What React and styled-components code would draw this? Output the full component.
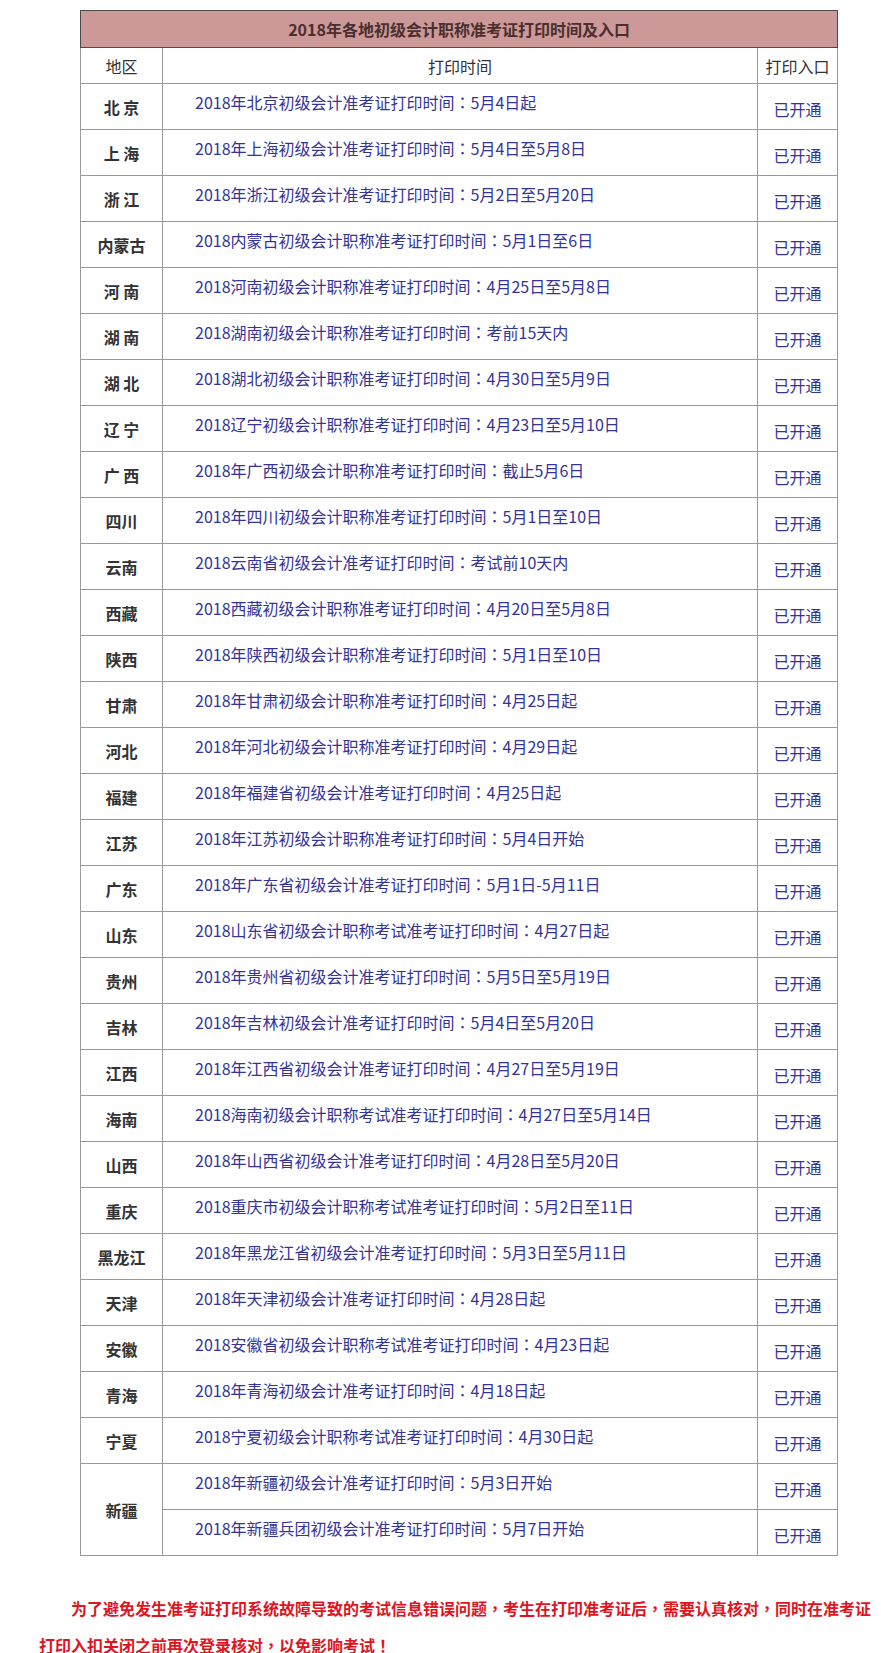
import React from "react";
import styled, { createGlobalStyle } from "styled-components";

const GlobalStyle = createGlobalStyle`
  body {
    margin: 0;
    background: #fff;
    font-family: "Noto Sans CJK SC", "Noto Sans", sans-serif;
  }
`;

const Page = styled.div`
  padding-top: 10px;
  width: 881px;
  height: 1653px;
  overflow: hidden;
  box-sizing: border-box;
`;

const Table = styled.table`
  margin-left: 80px;
  width: 757px;
  border-collapse: collapse;
  table-layout: fixed;
  border: 1px solid #4a4a4a;
  font-size: 16px;

  th,
  td {
    box-sizing: border-box;
  }
`;

const TitleCell = styled.th`
  height: 37px;
  padding: 0;
  background: #cd9898;
  color: #4a2f2f;
  font-weight: 700;
  font-size: 16px;
  line-height: 20px;
  text-align: center;
  border: 1px solid #4a4a4a;
`;

const HeadCell = styled.th`
  height: 36px;
  padding: 0;
  color: #333;
  font-weight: 400;
  font-size: 16px;
  line-height: 20px;
  text-align: center;
  border: 1px solid #999;
`;

const RegionCell = styled.td`
  height: 46px;
  padding: 0;
  color: #333;
  font-weight: 700;
  line-height: 20px;
  text-align: center;
  vertical-align: middle;
  border: 1px solid #999;
  white-space: pre;
`;

const TimeCell = styled.td`
  height: 46px;
  padding: 8px 0 0 32px;
  color: #333399;
  line-height: 20px;
  vertical-align: top;
  border: 1px solid #999;
  white-space: nowrap;
`;

const EntryCell = styled.td`
  height: 46px;
  padding: 5px 0 0;
  color: #333399;
  line-height: 20px;
  text-align: center;
  vertical-align: middle;
  border: 1px solid #999;
`;

/* centred full-width punctuation, as in the original page */
const Punct = styled.span`
  font-family: "Noto Sans CJK TC", "Noto Sans CJK SC", sans-serif;
`;

const Note = styled.p`
  margin: 34px 0 0;
  padding-left: 39px;
  color: #e0141e;
  font-weight: 700;
  font-size: 16px;
  line-height: 37px;
  text-indent: 32px;
`;

const withPunct = (text) =>
  text.split(/([：，！])/).map((part, i) =>
    /^[：，！]$/.test(part) ? <Punct key={i}>{part}</Punct> : part
  );

const rows = [
  ["北 京", "2018年北京初级会计准考证打印时间：5月4日起"],
  ["上 海", "2018年上海初级会计准考证打印时间：5月4日至5月8日"],
  ["浙 江", "2018年浙江初级会计准考证打印时间：5月2日至5月20日"],
  ["内蒙古", "2018内蒙古初级会计职称准考证打印时间：5月1日至6日"],
  ["河 南", "2018河南初级会计职称准考证打印时间：4月25日至5月8日"],
  ["湖 南", "2018湖南初级会计职称准考证打印时间：考前15天内"],
  ["湖 北", "2018湖北初级会计职称准考证打印时间：4月30日至5月9日"],
  ["辽 宁", "2018辽宁初级会计职称准考证打印时间：4月23日至5月10日"],
  ["广 西", "2018年广西初级会计职称准考证打印时间：截止5月6日"],
  ["四川", "2018年四川初级会计职称准考证打印时间：5月1日至10日"],
  ["云南", "2018云南省初级会计准考证打印时间：考试前10天内"],
  ["西藏", "2018西藏初级会计职称准考证打印时间：4月20日至5月8日"],
  ["陕西", "2018年陕西初级会计职称准考证打印时间：5月1日至10日"],
  ["甘肃", "2018年甘肃初级会计职称准考证打印时间：4月25日起"],
  ["河北", "2018年河北初级会计职称准考证打印时间：4月29日起"],
  ["福建", "2018年福建省初级会计准考证打印时间：4月25日起"],
  ["江苏", "2018年江苏初级会计职称准考证打印时间：5月4日开始"],
  ["广东", "2018年广东省初级会计准考证打印时间：5月1日-5月11日"],
  ["山东", "2018山东省初级会计职称考试准考证打印时间：4月27日起"],
  ["贵州", "2018年贵州省初级会计准考证打印时间：5月5日至5月19日"],
  ["吉林", "2018年吉林初级会计准考证打印时间：5月4日至5月20日"],
  ["江西", "2018年江西省初级会计准考证打印时间：4月27日至5月19日"],
  ["海南", "2018海南初级会计职称考试准考证打印时间：4月27日至5月14日"],
  ["山西", "2018年山西省初级会计准考证打印时间：4月28日至5月20日"],
  ["重庆", "2018重庆市初级会计职称考试准考证打印时间：5月2日至11日"],
  ["黑龙江", "2018年黑龙江省初级会计准考证打印时间：5月3日至5月11日"],
  ["天津", "2018年天津初级会计准考证打印时间：4月28日起"],
  ["安徽", "2018安徽省初级会计职称考试准考证打印时间：4月23日起"],
  ["青海", "2018年青海初级会计准考证打印时间：4月18日起"],
  ["宁夏", "2018宁夏初级会计职称考试准考证打印时间：4月30日起"],
];

const App = () => {
  return (
    <Page>
      <GlobalStyle />
      <Table>
        <colgroup>
          <col style={{ width: 82 }} />
          <col style={{ width: 595 }} />
          <col style={{ width: 80 }} />
        </colgroup>
        <thead>
          <tr>
            <TitleCell colSpan={3}>2018年各地初级会计职称准考证打印时间及入口</TitleCell>
          </tr>
          <tr>
            <HeadCell>地区</HeadCell>
            <HeadCell>打印时间</HeadCell>
            <HeadCell>打印入口</HeadCell>
          </tr>
        </thead>
        <tbody>
          {rows.map(([region, time]) => (
            <tr key={region}>
              <RegionCell>{region}</RegionCell>
              <TimeCell>{withPunct(time)}</TimeCell>
              <EntryCell>已开通</EntryCell>
            </tr>
          ))}
          <tr>
            <RegionCell rowSpan={2}>新疆</RegionCell>
            <TimeCell>{withPunct("2018年新疆初级会计准考证打印时间：5月3日开始")}</TimeCell>
            <EntryCell>已开通</EntryCell>
          </tr>
          <tr>
            <TimeCell>{withPunct("2018年新疆兵团初级会计准考证打印时间：5月7日开始")}</TimeCell>
            <EntryCell>已开通</EntryCell>
          </tr>
        </tbody>
      </Table>
      <Note>
        {withPunct(
          "为了避免发生准考证打印系统故障导致的考试信息错误问题，考生在打印准考证后，需要认真核对，同时在准考证打印入扣关闭之前再次登录核对，以免影响考试！"
        )}
      </Note>
    </Page>
  );
};

export default App;
